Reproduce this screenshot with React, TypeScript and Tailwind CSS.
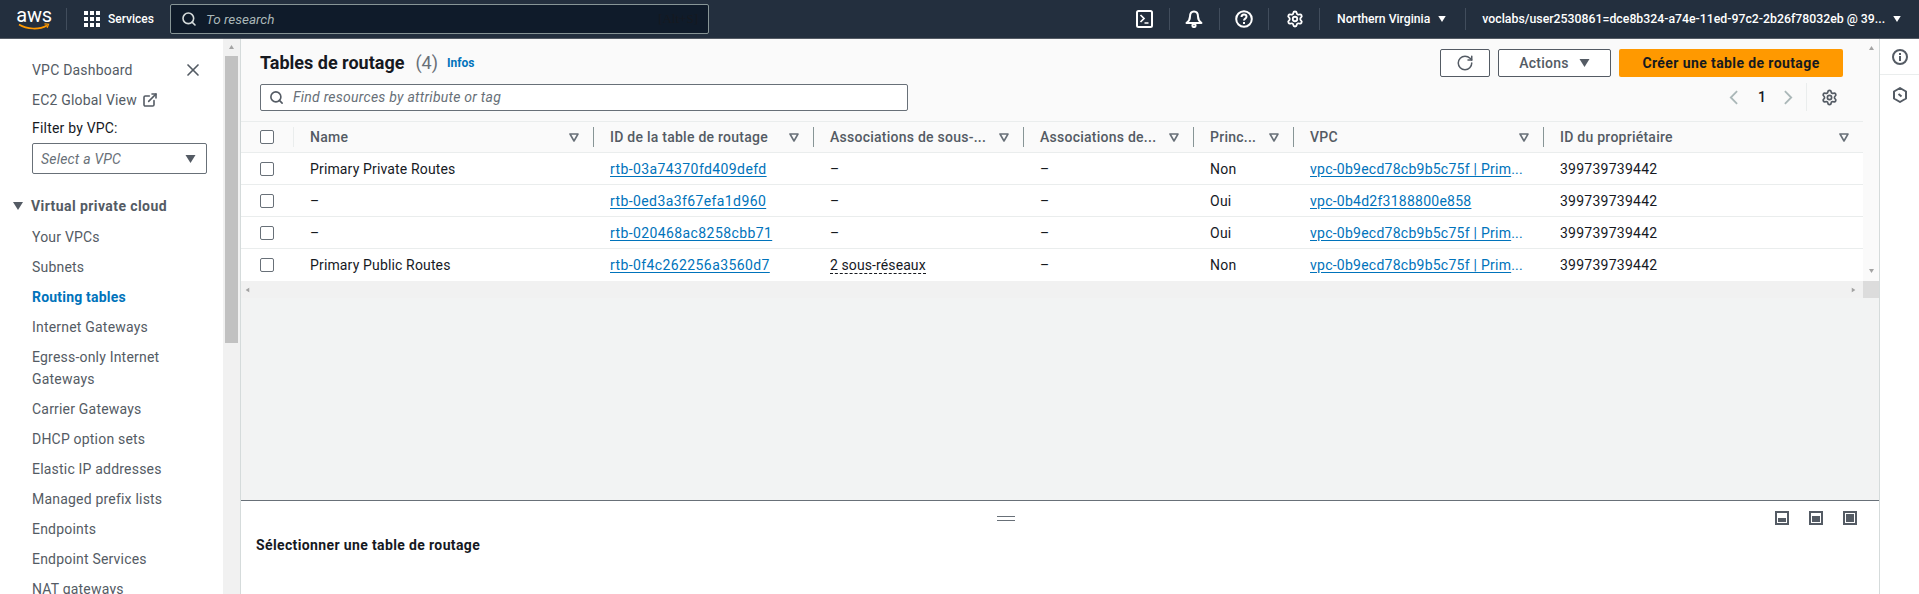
import { Search, X, ExternalLink, RotateCw, Settings } from 'lucide-react';

const SANS = "font-['Roboto','Liberation_Sans',sans-serif]";

const navItems = [
  'Your VPCs',
  'Subnets',
  'Routing tables',
  'Internet Gateways',
  'Egress-only Internet Gateways',
  'Carrier Gateways',
  'DHCP option sets',
  'Elastic IP addresses',
  'Managed prefix lists',
  'Endpoints',
  'Endpoint Services',
  'NAT gateways',
];

const columns = ['Name', 'ID de la table de routage', 'Associations de sous-...', 'Associations de...', 'Princ...', 'VPC', 'ID du propriétaire'];

const VPC_LONG = 'vpc-0b9ecd78cb9b5c75f | Prim';

const rows = [
  { name: 'Primary Private Routes', id: 'rtb-03a74370fd409defd', assoc: '–', main: 'Non', vpc: VPC_LONG },
  { name: '–', id: 'rtb-0ed3a3f67efa1d960', assoc: '–', main: 'Oui', vpc: 'vpc-0b4d2f3188800e858' },
  { name: '–', id: 'rtb-020468ac8258cbb71', assoc: '–', main: 'Oui', vpc: VPC_LONG },
  { name: 'Primary Public Routes', id: 'rtb-0f4c262256a3560d7', assoc: '2 sous-réseaux', main: 'Non', vpc: VPC_LONG },
];

const GRID = 'grid grid-cols-[53px_300px_220px_210px_170px_100px_250px_319px]';

function FilterCaret() {
  return (
    <svg viewBox="0 0 10 9" className="h-[9px] w-[10px] shrink-0 text-[#687078]" fill="none" stroke="currentColor" strokeWidth="1.6">
      <path d="M1 1h8L5 8z" strokeLinejoin="round" />
    </svg>
  );
}

function Caret({ className }: { className?: string }) {
  return (
    <svg viewBox="0 0 10 8" className={className} fill="currentColor">
      <path d="M0 0h10L5 8z" />
    </svg>
  );
}

function Checkbox() {
  return <span className="block h-[14px] w-[14px] rounded-[2px] border border-[#687078] bg-white" />;
}

function NavSep() {
  return <span className="block h-[22px] w-px bg-[#414d5c]" />;
}

function TopNav() {
  return (
    <header className="flex h-[39px] shrink-0 items-center border-b border-[#545b64] bg-[#232f3e] text-white">
      <div className="flex w-[66px] flex-col items-center pl-[2px]">
        <span className="text-[20px] leading-[15px] tracking-[-0.3px]">aws</span>
        <svg viewBox="0 0 32 8" className="h-[8px] w-[32px]" fill="none">
          <path d="M1 1.500c8 5 20 5.500 28 1" stroke="#ff9900" strokeWidth="1.600" />
          <path d="M26.500 .8l4 .4-1.400 3.600" stroke="#ff9900" strokeWidth="1.300" />
        </svg>
      </div>
      <NavSep />
      <svg viewBox="0 0 16 16" className="ml-[17px] h-4 w-4" fill="white">
        <rect x="0" y="0" width="4" height="4" />
        <rect x="6" y="0" width="4" height="4" />
        <rect x="12" y="0" width="4" height="4" />
        <rect x="0" y="6" width="4" height="4" />
        <rect x="6" y="6" width="4" height="4" />
        <rect x="12" y="6" width="4" height="4" />
        <rect x="0" y="12" width="4" height="4" />
        <rect x="6" y="12" width="4" height="4" />
        <rect x="12" y="12" width="4" height="4" />
      </svg>
      <span className="ml-2 w-[62px] text-xs font-medium">Services</span>
      <div className="flex h-[30px] w-[539px] items-center rounded-[2px] border border-[#879596] bg-[#0f1b2a] px-[10px]">
        <Search className="h-4 w-4 text-[#d5dbdb]" strokeWidth={2.4} />
        <span className="ml-[9px] flex-1 text-[13.5px] text-[#aab7b8] italic">To research</span>
        <span className="font-['Liberation_Serif',serif] text-[13px] text-[#16191f]">[Alt+S]</span>
      </div>
      <div className="ml-[427px] flex items-center">
        <svg viewBox="0 0 18 18" className="h-[18px] w-[18px]" fill="none" stroke="white" strokeWidth="2">
          <rect x="1" y="1" width="15" height="16" rx="1.500" />
          <path d="M4.500 5l3.500 3.500L4.500 12M8.500 13h4" strokeWidth="1.700" />
        </svg>
        <span className="mr-[15px] ml-[15px]"><NavSep /></span>
        <svg viewBox="0 0 18 18" className="h-[18px] w-[18px]" fill="none" stroke="white" strokeWidth="2">
          <path d="M9 1.500c3 0 4 2.500 4 5 0 3 1 4.500 3.500 6.500h-15C4 11 5 9.500 5 6.500c0-2.500 1-5 4-5z" strokeLinejoin="round" />
          <circle cx="9" cy="15.500" r="1.600" />
        </svg>
        <span className="mr-[15px] ml-[16px]"><NavSep /></span>
        <svg viewBox="0 0 18 18" className="h-[18px] w-[18px]" fill="none" stroke="white" strokeWidth="2">
          <circle cx="9" cy="9" r="7.800" />
          <path d="M6.500 7c0-1.500 1-2.500 2.500-2.500s2.500 1 2.500 2.300c0 1.800-2.500 1.900-2.500 3.700" />
          <path d="M9 12v2" />
        </svg>
        <span className="mr-[17px] ml-[15px]"><NavSep /></span>
        <Settings className="h-[18px] w-[18px] text-white" strokeWidth={2.4} />
        <span className="mr-[17px] ml-[15px]"><NavSep /></span>
        <span className="text-[12.2px] font-medium whitespace-nowrap">Northern Virginia</span>
        <Caret className="ml-[8px] h-[6px] w-[8px] text-white" />
        <span className="mr-[16px] ml-[19px]"><NavSep /></span>
        <span className="w-[404px] text-[12.3px] font-medium whitespace-nowrap">voclabs/user2530861=dce8b324-a74e-11ed-97c2-2b26f78032eb @ 39...</span>
        <Caret className="ml-[7px] h-[6px] w-[8px] text-white" />
      </div>
    </header>
  );
}

function Sidebar() {
  return (
    <aside className="flex w-[241px] shrink-0 overflow-hidden">
      <div className="h-full w-[223px] shrink-0 bg-white pl-[32px] text-sm tracking-[0.2px] text-[#545b64]">
        <div className="flex items-center pt-[20px]">
          <span className="flex-1 leading-[22px]">VPC Dashboard</span>
          <X className="mr-[20px] h-[20px] w-[20px] text-[#545b64]" strokeWidth={2} />
        </div>
        <div className="mt-2 flex items-center gap-[5px] leading-[22px]">
          EC2 Global View
          <ExternalLink className="h-[16px] w-[16px]" strokeWidth={2.4} />
        </div>
        <div className="mt-[6px] leading-[22px] text-[#16191f]">Filter by VPC:</div>
        <div className="mt-[4px] flex h-[31px] w-[175px] items-center justify-between rounded-[2px] border border-[#687078] pt-px pr-[10px] pl-[8px] text-sm text-[#687078] italic">
          Select a VPC
          <Caret className="h-[8px] w-[11px] text-[#545b64]" />
        </div>
        <div className="mt-[21px] -ml-[19px] flex items-center leading-[22px] font-bold tracking-[0.42px]">
          <Caret className="mr-[8px] h-[8px] w-[10px] text-[#545b64]" />
          Virtual private cloud
        </div>
        <ul className="mt-[5px] w-[170px]">
          {navItems.map((item) => (
            <li key={item} className={`py-1 leading-[22px] ${item === 'Routing tables' ? 'font-bold text-[#0073bb]' : ''}`}>
              {item}
            </li>
          ))}
        </ul>
      </div>
      <div className="flex h-[555px] w-[17px] shrink-0 flex-col items-center bg-[#f1f1f1] pt-[6px]">
        <Caret className="h-[4px] w-[7px] rotate-180 text-[#a3a3a3]" />
        <div className="mt-[7px] h-[287px] w-[13px] bg-[#c1c1c1]" />
      </div>
      <div className="h-full w-px bg-[#d5dbdb]" />
    </aside>
  );
}

function TableHeader() {
  return (
    <div className={`${GRID} h-[32px] items-center border-y border-[#eaeded] bg-[#fafafa] text-sm leading-none font-medium tracking-[0.25px] text-[#545b64]`}>
      <div className="flex h-full items-center justify-between pl-[19px]">
        <Checkbox />
        <span className="h-[20px] w-px bg-[#eaeded]" />
      </div>
      {columns.map((col) => (
        <div key={col} className="flex h-[20px] items-center justify-between border-r border-[#879596] pr-[14px] pl-[16px] whitespace-nowrap last:border-r-0">
          <span>{col}</span>
          <FilterCaret />
        </div>
      ))}
    </div>
  );
}

function TableRow({ row }: { row: (typeof rows)[number] }) {
  const clipped = row.vpc === VPC_LONG;
  return (
    <div className={`${GRID} h-[32px] items-center border-b border-[#eaeded] bg-white pt-px text-sm tracking-[0.25px] text-[#16191f] last:border-b-0 last:pt-0`}>
      <div className="pl-[19px]">
        <Checkbox />
      </div>
      <div className="pl-[16px] tracking-[0.15px]">{row.name}</div>
      <div className="pl-[16px] tracking-[0.4px]">
        <span className="text-[#0073bb] underline underline-offset-2">{row.id}</span>
      </div>
      <div className="pl-[16px] tracking-[0.1px]">
        <span className={row.assoc === '–' ? '' : 'border-b border-dashed border-[#16191f]'}>{row.assoc}</span>
      </div>
      <div className="pl-[16px]">–</div>
      <div className="pl-[16px]">{row.main}</div>
      <div className="pl-[16px] whitespace-nowrap text-[#0073bb]">
        <span className="underline underline-offset-2">{row.vpc}</span>
        {clipped && <span>...</span>}
      </div>
      <div className="pl-[16px]">399739739442</div>
    </div>
  );
}

function PanelIcon({ inner }: { inner: string }) {
  return (
    <span className="flex h-[14px] w-[14px] flex-col justify-end border-2 border-[#545b64] bg-white p-px">
      <span className={`block w-full bg-[#545b64] ${inner}`} />
    </span>
  );
}

function Pager() {
  return (
    <div className="flex items-center">
      <svg viewBox="0 0 10 16" className="h-[15px] w-[9px]" fill="none" stroke="#aab7b8" strokeWidth="2">
        <path d="M9 1L2 8l7 7" />
      </svg>
      <span className="mr-[19px] ml-[20px] w-[7px] text-sm font-medium text-[#16191f]">1</span>
      <svg viewBox="0 0 10 16" className="h-[15px] w-[9px]" fill="none" stroke="#aab7b8" strokeWidth="2">
        <path d="M1 1l7 7-7 7" />
      </svg>
      <span className="mr-[14px] ml-[13px] h-[28px] w-px bg-[#eaeded]" />
      <Settings className="mr-[5px] h-[17px] w-[17px] text-[#545b64]" strokeWidth={2.4} />
    </div>
  );
}

function Main() {
  return (
    <main className="flex min-w-0 flex-1 flex-col">
      <div className="flex h-[462px] shrink-0 flex-col border-b border-[#687078] bg-[#f2f3f3]">
        <div className="flex h-[259px] shrink-0">
          <div className="flex w-[1622px] shrink-0 flex-col">
            <div className="flex h-[82px] shrink-0 flex-col bg-[#fafafa] pt-[10px] pr-[20px] pl-[19px]">
              <div className="flex h-[28px] items-center">
                <h1 className="pb-[2px] text-[18px] font-bold text-[#16191f]">Tables de routage</h1>
                <span className="ml-[11px] pb-[2px] text-[18px] text-[#687078]">(4)</span>
                <span className="ml-[9px] text-xs font-bold text-[#0073bb]">Infos</span>
                <div className="ml-auto flex gap-2">
                  <button className="flex h-[28px] w-[50px] items-center justify-center rounded-[2px] border border-[#545b64] bg-white">
                    <RotateCw className="h-[18px] w-[18px] text-[#545b64]" strokeWidth={2} />
                  </button>
                  <button className="flex h-[28px] w-[113px] items-center justify-center gap-[10px] rounded-[2px] border border-[#545b64] bg-white text-sm font-medium tracking-[0.25px] text-[#545b64]">
                    Actions
                    <Caret className="h-[8px] w-[11px] text-[#545b64]" />
                  </button>
                  <button className="h-[28px] w-[224px] rounded-[2px] bg-[#ff9900] text-sm font-bold tracking-[0.4px] text-[#16191f]">
                    Créer une table de routage
                  </button>
                </div>
              </div>
              <div className="mt-[6px] flex items-center">
                <div className="flex h-[27px] w-[648px] items-center rounded-[2px] border border-[#687078] bg-white pl-[8px]">
                  <Search className="h-[15px] w-[15px] text-[#545b64]" strokeWidth={2.6} />
                  <span className="ml-[9px] text-sm tracking-[0.25px] text-[#687078] italic">Find resources by attribute or tag</span>
                </div>
                <div className="ml-auto">
                  <Pager />
                </div>
              </div>
            </div>
            <TableHeader />
            <div>
              {rows.map((row) => (
                <TableRow key={row.id} row={row} />
              ))}
            </div>
            <div className="flex h-[17px] shrink-0 items-center justify-between bg-[#f1f1f1] pr-[6px] pl-[3px]">
              <Caret className="h-[4px] w-[7px] rotate-90 text-[#a3a3a3]" />
              <Caret className="h-[4px] w-[7px] -rotate-90 text-[#a3a3a3]" />
            </div>
          </div>
          <div className="flex h-full w-[16px] flex-col items-center justify-between bg-[#fafafa]">
            <Caret className="mt-[7px] h-[4px] w-[7px] rotate-180 text-[#a3a3a3]" />
            <div className="flex flex-col items-center gap-[8px]">
              <Caret className="h-[4px] w-[7px] text-[#a3a3a3]" />
              <div className="h-[17px] w-[16px] bg-[#dcdcdc]" />
            </div>
          </div>
        </div>
      </div>
      <div className="flex-1 bg-white px-[15px]">
        <div className="flex h-[24px] items-center pt-[10px]">
          <div className="ml-[741px] flex flex-col gap-[3px]">
            <span className="block h-px w-[18px] bg-[#687078]" />
            <span className="block h-px w-[18px] bg-[#687078]" />
          </div>
          <div className="mr-[7px] ml-auto flex gap-[20px]">
            <PanelIcon inner="h-[4px]" />
            <PanelIcon inner="h-[6px]" />
            <PanelIcon inner="h-full" />
          </div>
        </div>
        <p className="mt-[10px] text-sm font-bold tracking-[0.37px] text-[#16191f]">Sélectionner une table de routage</p>
      </div>
    </main>
  );
}

function RightRail() {
  return (
    <aside className="flex w-[40px] shrink-0 flex-col border-l border-[#d5dbdb] bg-white">
      <div className="flex h-[36px] items-center justify-center border-b border-[#eaeded]">
        <svg viewBox="0 0 16 16" className="h-4 w-4" fill="none" stroke="#545b64" strokeWidth="2">
          <circle cx="8" cy="8" r="7" />
          <path d="M8 7v5M8 4v2" />
        </svg>
      </div>
      <div className="flex h-[40px] items-center justify-center">
        <svg viewBox="0 0 16 16" className="h-4 w-4" fill="none" stroke="#545b64" strokeWidth="2">
          <path d="M8 1l6 3.500v7L8 15l-6-3.500v-7z" strokeLinejoin="round" />
          <path d="M6.500 7l3 2.500" />
        </svg>
      </div>
    </aside>
  );
}

export default function App() {
  return (
    <div className={`${SANS} flex h-screen flex-col overflow-hidden bg-white`}>
      <TopNav />
      <div className="flex min-h-0 flex-1">
        <Sidebar />
        <Main />
        <RightRail />
      </div>
    </div>
  );
}
